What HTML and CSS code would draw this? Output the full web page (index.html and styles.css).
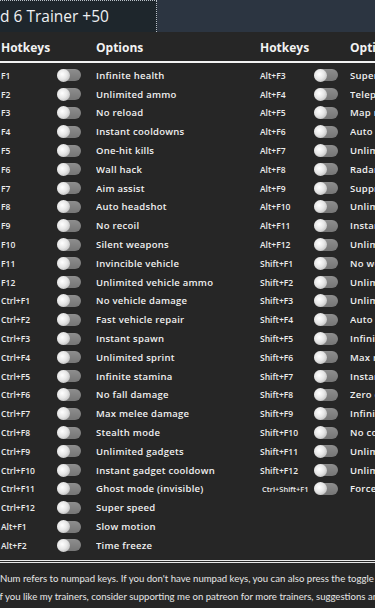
FILE: index.html
```html
<!DOCTYPE html>
<html lang="en">
<head>
    <meta charset="UTF-8">
    <meta name="viewport" content="width=device-width, initial-scale=1.0">
    <title>Trainer +50</title>
    <link rel="stylesheet" href="styles.css">
</head>
<body>
    <div class="titlebar">
        <div class="tab">d 6 Trainer +50</div>
        <div class="tab-rest"></div>
    </div>

    <div class="table">
        <div class="col">
            <div class="head"><span>Hotkeys</span><span></span><span>Options</span></div>
            <div class="row"><span class="key">F1</span><span class="toggle"></span><span class="opt">Infinite health</span></div>
            <div class="row"><span class="key">F2</span><span class="toggle"></span><span class="opt">Unlimited ammo</span></div>
            <div class="row"><span class="key">F3</span><span class="toggle"></span><span class="opt">No reload</span></div>
            <div class="row"><span class="key">F4</span><span class="toggle"></span><span class="opt">Instant cooldowns</span></div>
            <div class="row"><span class="key">F5</span><span class="toggle"></span><span class="opt">One-hit kills</span></div>
            <div class="row"><span class="key">F6</span><span class="toggle"></span><span class="opt">Wall hack</span></div>
            <div class="row"><span class="key">F7</span><span class="toggle"></span><span class="opt">Aim assist</span></div>
            <div class="row"><span class="key">F8</span><span class="toggle"></span><span class="opt">Auto headshot</span></div>
            <div class="row"><span class="key">F9</span><span class="toggle"></span><span class="opt">No recoil</span></div>
            <div class="row"><span class="key">F10</span><span class="toggle"></span><span class="opt">Silent weapons</span></div>
            <div class="row"><span class="key">F11</span><span class="toggle"></span><span class="opt">Invincible vehicle</span></div>
            <div class="row"><span class="key">F12</span><span class="toggle"></span><span class="opt">Unlimited vehicle ammo</span></div>
            <div class="row"><span class="key">Ctrl+F1</span><span class="toggle"></span><span class="opt">No vehicle damage</span></div>
            <div class="row"><span class="key">Ctrl+F2</span><span class="toggle"></span><span class="opt">Fast vehicle repair</span></div>
            <div class="row"><span class="key">Ctrl+F3</span><span class="toggle"></span><span class="opt">Instant spawn</span></div>
            <div class="row"><span class="key">Ctrl+F4</span><span class="toggle"></span><span class="opt">Unlimited sprint</span></div>
            <div class="row"><span class="key">Ctrl+F5</span><span class="toggle"></span><span class="opt">Infinite stamina</span></div>
            <div class="row"><span class="key">Ctrl+F6</span><span class="toggle"></span><span class="opt">No fall damage</span></div>
            <div class="row"><span class="key">Ctrl+F7</span><span class="toggle"></span><span class="opt">Max melee damage</span></div>
            <div class="row"><span class="key">Ctrl+F8</span><span class="toggle"></span><span class="opt">Stealth mode</span></div>
            <div class="row"><span class="key">Ctrl+F9</span><span class="toggle"></span><span class="opt">Unlimited gadgets</span></div>
            <div class="row"><span class="key">Ctrl+F10</span><span class="toggle"></span><span class="opt">Instant gadget cooldown</span></div>
            <div class="row"><span class="key">Ctrl+F11</span><span class="toggle"></span><span class="opt">Ghost mode (invisible)</span></div>
            <div class="row"><span class="key">Ctrl+F12</span><span class="toggle"></span><span class="opt">Super speed</span></div>
            <div class="row"><span class="key">Alt+F1</span><span class="toggle"></span><span class="opt">Slow motion</span></div>
            <div class="row"><span class="key">Alt+F2</span><span class="toggle"></span><span class="opt">Time freeze</span></div>
        </div>

        <div class="col col-right">
            <div class="head"><span>Hotkeys</span><span></span><span>Options</span></div>
            <div class="row"><span class="key">Alt+F3</span><span class="toggle"></span><span class="opt">Super jump</span></div>
            <div class="row"><span class="key">Alt+F4</span><span class="toggle"></span><span class="opt">Teleport to waypoint</span></div>
            <div class="row"><span class="key">Alt+F5</span><span class="toggle"></span><span class="opt">Map reveal</span></div>
            <div class="row"><span class="key">Alt+F6</span><span class="toggle"></span><span class="opt">Auto capture</span></div>
            <div class="row"><span class="key">Alt+F7</span><span class="toggle"></span><span class="opt">Unlimited grenades</span></div>
            <div class="row"><span class="key">Alt+F8</span><span class="toggle"></span><span class="opt">Radar hack</span></div>
            <div class="row"><span class="key">Alt+F9</span><span class="toggle"></span><span class="opt">Suppression immunity</span></div>
            <div class="row"><span class="key">Alt+F10</span><span class="toggle"></span><span class="opt">Unlimited armor</span></div>
            <div class="row"><span class="key">Alt+F11</span><span class="toggle"></span><span class="opt">Instant revive</span></div>
            <div class="row"><span class="key">Alt+F12</span><span class="toggle"></span><span class="opt">Unlimited shield</span></div>
            <div class="row"><span class="key">Shift+F1</span><span class="toggle"></span><span class="opt">No weapon sway</span></div>
            <div class="row"><span class="key">Shift+F2</span><span class="toggle"></span><span class="opt">Unlimited score</span></div>
            <div class="row"><span class="key">Shift+F3</span><span class="toggle"></span><span class="opt">Unlimited XP</span></div>
            <div class="row"><span class="key">Shift+F4</span><span class="toggle"></span><span class="opt">Auto pickup</span></div>
            <div class="row"><span class="key">Shift+F5</span><span class="toggle"></span><span class="opt">Infinite fuel</span></div>
            <div class="row"><span class="key">Shift+F6</span><span class="toggle"></span><span class="opt">Max rank</span></div>
            <div class="row"><span class="key">Shift+F7</span><span class="toggle"></span><span class="opt">Instant kill</span></div>
            <div class="row"><span class="key">Shift+F8</span><span class="toggle"></span><span class="opt">Zero cooldown</span></div>
            <div class="row"><span class="key">Shift+F9</span><span class="toggle"></span><span class="opt">Infinite oxygen</span></div>
            <div class="row"><span class="key">Shift+F10</span><span class="toggle"></span><span class="opt">No collision</span></div>
            <div class="row"><span class="key">Shift+F11</span><span class="toggle"></span><span class="opt">Unlimited flares</span></div>
            <div class="row"><span class="key">Shift+F12</span><span class="toggle"></span><span class="opt">Unlimited boost</span></div>
            <div class="row"><span class="key key-small">Ctrl+Shift+F1</span><span class="toggle"></span><span class="opt">Force win</span></div>
        </div>
    </div>

    <div class="footer">
        <p>Num refers to numpad keys. If you don't have numpad keys, you can also press the toggle switches.</p>
        <p class="cut">If you like my trainers, consider supporting me on patreon for more trainers, suggestions and requests.</p>
    </div>
</body>
</html>
```

FILE: styles.css
```css
html, body {
    margin: 0;
    padding: 0;
}
body {
    width: 375px;
    height: 608px;
    overflow: hidden;
    background-color: #262626;
    color: #f2f2f2;
    font-family: 'Open Sans', sans-serif;
}
.titlebar {
    display: flex;
    height: 32px;
    background-color: #2c3541;
}
.tab {
    width: 157px;
    flex-shrink: 0;
    background-color: #1e262c;
    border-top: 1px dotted #b9c0c8;
    border-right: 1px dotted #b9c0c8;
    box-sizing: border-box;
    font-size: 15.5px;
    line-height: 31px;
    color: #eef0f2;
    white-space: nowrap;
    overflow: hidden;
}
.tab-rest {
    flex: 1;
}
.table {
    display: grid;
    grid-template-columns: 259px 1fr;
    padding-left: 1px;
    border-bottom: 3px double #e8e8e8;
    padding-bottom: 5px;
}
.col {
    display: grid;
    grid-template-columns: 56px 39px 1fr;
    grid-template-rows: 34px;
    grid-auto-rows: 18.8px;
    align-items: center;
    white-space: nowrap;
}
.col-right {
    grid-template-columns: 54px 36px 1fr;
}
.head, .row {
    display: contents;
}
.head span {
    grid-row: 1;
    align-self: start;
    height: 29px;
    margin-bottom: 3px;
    border-bottom: 2px solid #f2f2f2;
    font-size: 12px;
    font-weight: 700;
    line-height: 32px;
}
.col-right .head span:first-child {
    margin-left: -260px;
    padding-left: 260px;
}
.key {
    font-size: 8.5px;
    font-weight: 600;
    color: #ececec;
}
.key-small {
    font-size: 7.5px;
    margin-left: 2px;
}
.opt {
    font-size: 9.5px;
    font-weight: 600;
    letter-spacing: 0.25px;
    color: #f0f0f0;
    overflow: hidden;
}
.toggle {
    position: relative;
    width: 24px;
    height: 12px;
    border-radius: 6px;
    background: linear-gradient(#8e8e8e, #767676);
}
.toggle::before {
    content: "";
    position: absolute;
    left: 0;
    top: -0.5px;
    width: 13px;
    height: 13px;
    border-radius: 50%;
    background: radial-gradient(circle at 40% 40%, #ffffff 0%, #e6e6e6 45%, #a9a9a9 100%);
}
.footer {
    padding-top: 7px;
    font-family: 'Lato', sans-serif;
    font-size: 9.6px;
    color: #e6e6e6;
    white-space: nowrap;
}
.footer p {
    margin: 0;
    line-height: 18px;
}
.cut {
    text-indent: -3px;
}
```
